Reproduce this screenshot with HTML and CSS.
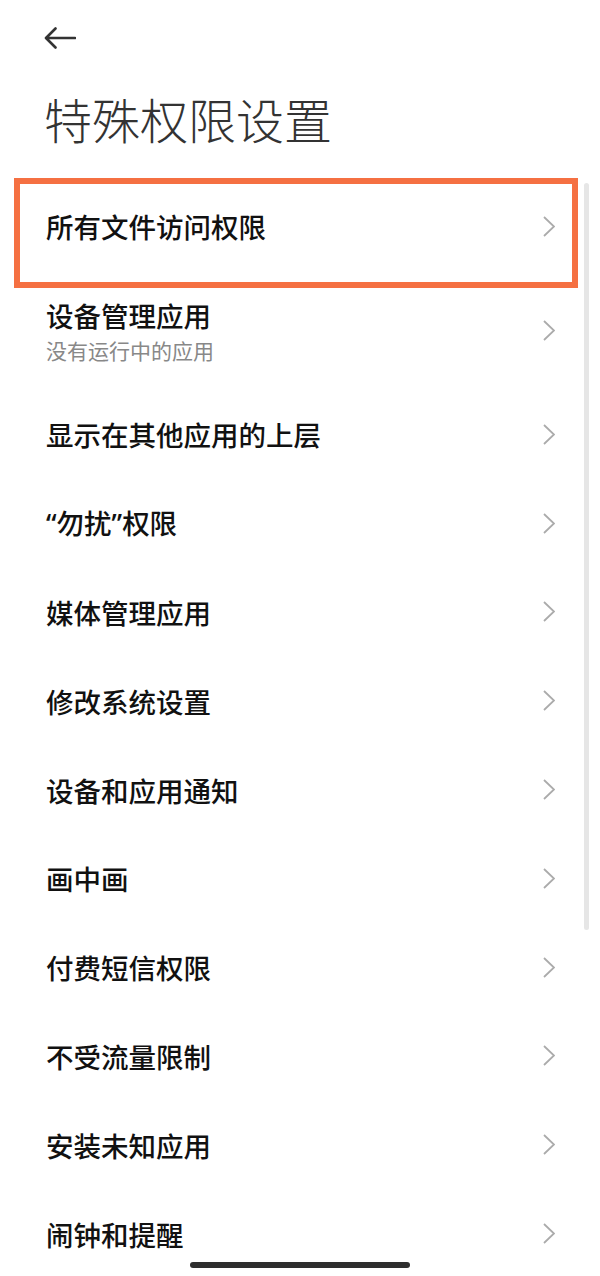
FILE: index.html
```html
<!DOCTYPE html>
<html lang="zh-CN">
<head>
<meta charset="utf-8">
<title>特殊权限设置</title>
<link rel="stylesheet" href="styles.css">
</head>
<body>
<div class="screen">
  <header class="header">
    <button class="back" aria-label="返回">
      <svg width="32" height="22" viewBox="0 0 32 22"><path d="M31 11H2.5M11.5 1.5L2 11l9.5 9.5" fill="none" stroke="#333" stroke-width="2.6" stroke-linecap="round" stroke-linejoin="round"/></svg>
    </button>
    <h1 class="title">特殊权限设置</h1>
  </header>
  <ul class="list">
    <li class="row highlighted"><span class="label">所有文件访问权限</span><svg class="chev" width="12" height="21" viewBox="0 0 12 21"><path d="M1 1l10 9.5L1 20" fill="none" stroke="#ababab" stroke-width="1.8"/></svg></li>
    <li class="row tall"><div class="texts"><span class="label">设备管理应用</span><span class="sub">没有运行中的应用</span></div><svg class="chev" width="12" height="21" viewBox="0 0 12 21"><path d="M1 1l10 9.5L1 20" fill="none" stroke="#ababab" stroke-width="1.8"/></svg></li>
    <li class="row"><span class="label">显示在其他应用的上层</span><svg class="chev" width="12" height="21" viewBox="0 0 12 21"><path d="M1 1l10 9.5L1 20" fill="none" stroke="#ababab" stroke-width="1.8"/></svg></li>
    <li class="row"><span class="label"><span class="q">“</span>勿扰<span class="q">”</span>权限</span><svg class="chev" width="12" height="21" viewBox="0 0 12 21"><path d="M1 1l10 9.5L1 20" fill="none" stroke="#ababab" stroke-width="1.8"/></svg></li>
    <li class="row"><span class="label">媒体管理应用</span><svg class="chev" width="12" height="21" viewBox="0 0 12 21"><path d="M1 1l10 9.5L1 20" fill="none" stroke="#ababab" stroke-width="1.8"/></svg></li>
    <li class="row"><span class="label">修改系统设置</span><svg class="chev" width="12" height="21" viewBox="0 0 12 21"><path d="M1 1l10 9.5L1 20" fill="none" stroke="#ababab" stroke-width="1.8"/></svg></li>
    <li class="row"><span class="label">设备和应用通知</span><svg class="chev" width="12" height="21" viewBox="0 0 12 21"><path d="M1 1l10 9.5L1 20" fill="none" stroke="#ababab" stroke-width="1.8"/></svg></li>
    <li class="row"><span class="label">画中画</span><svg class="chev" width="12" height="21" viewBox="0 0 12 21"><path d="M1 1l10 9.5L1 20" fill="none" stroke="#ababab" stroke-width="1.8"/></svg></li>
    <li class="row"><span class="label">付费短信权限</span><svg class="chev" width="12" height="21" viewBox="0 0 12 21"><path d="M1 1l10 9.5L1 20" fill="none" stroke="#ababab" stroke-width="1.8"/></svg></li>
    <li class="row"><span class="label">不受流量限制</span><svg class="chev" width="12" height="21" viewBox="0 0 12 21"><path d="M1 1l10 9.5L1 20" fill="none" stroke="#ababab" stroke-width="1.8"/></svg></li>
    <li class="row"><span class="label">安装未知应用</span><svg class="chev" width="12" height="21" viewBox="0 0 12 21"><path d="M1 1l10 9.5L1 20" fill="none" stroke="#ababab" stroke-width="1.8"/></svg></li>
    <li class="row"><span class="label">闹钟和提醒</span><svg class="chev" width="12" height="21" viewBox="0 0 12 21"><path d="M1 1l10 9.5L1 20" fill="none" stroke="#ababab" stroke-width="1.8"/></svg></li>
  </ul>
  <div class="scrollbar"></div>
  <div class="home-bar"></div>
</div>
</body>
</html>
```

FILE: styles.css
```css
html, body {
  margin: 0;
  padding: 0;
  height: 1276px;
  overflow: hidden;
  background: #ffffff;
  font-family: "Noto Sans CJK SC", "Noto Sans", sans-serif;
}

.screen {
  position: relative;
  width: 600px;
  height: 1276px;
  overflow: hidden;
}

.header {
  padding: 27px 45px 0 44px;
}

.back {
  display: block;
  padding: 0;
  margin: 0;
  border: 0;
  background: none;
  width: 32px;
  height: 22px;
}

.back svg {
  display: block;
}

.title {
  margin: 45px 0 0 0;
  font-size: 48px;
  line-height: 48px;
  font-weight: 300;
  color: #333333;
  letter-spacing: 0;
}

.list {
  list-style: none;
  margin: 40px 0 0 0;
  padding: 0;
}

.row {
  position: relative;
  display: flex;
  align-items: center;
  justify-content: space-between;
  height: 88.8px;
  padding: 0 45px 0 46px;
  box-sizing: border-box;
}

.row.tall {
  height: 119.2px;
}

.label {
  font-size: 27.5px;
  line-height: 34px;
  font-weight: 500;
  color: #111111;
}

.q {
  font-family: "Noto Sans", "DejaVu Sans", sans-serif;
  font-weight: 500;
}

.texts {
  display: flex;
  flex-direction: column;
  gap: 5px;
}

.sub {
  font-size: 21px;
  line-height: 26px;
  color: #888888;
}

.chev {
  display: block;
  flex: none;
}

.highlighted::after {
  content: "";
  position: absolute;
  left: 14px;
  right: 22px;
  top: -4px;
  bottom: -17px;
  border: 6.5px solid #f57042;
  pointer-events: none;
}

.scrollbar {
  position: absolute;
  left: 584px;
  top: 183px;
  width: 5px;
  height: 747px;
  border-radius: 3px;
  background: #e6e6e6;
}

.home-bar {
  position: absolute;
  left: 190px;
  bottom: 8px;
  width: 220px;
  height: 6px;
  border-radius: 3px;
  background: #2e2e2e;
}
```
